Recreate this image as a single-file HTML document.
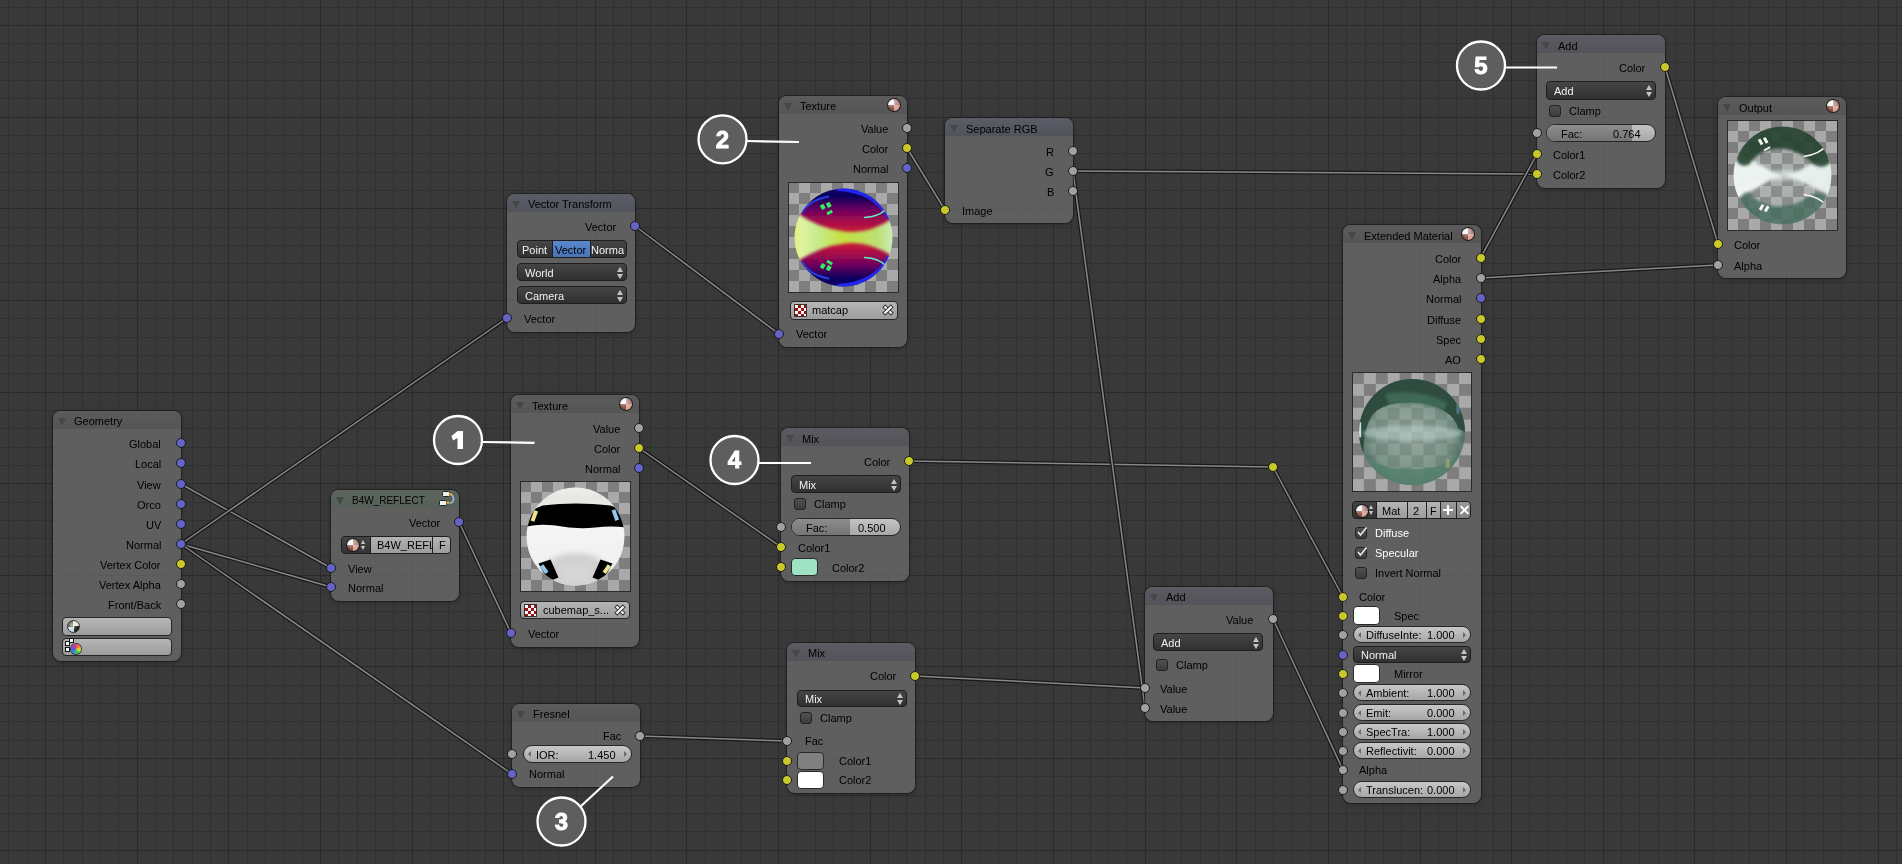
<!DOCTYPE html>
<html><head><meta charset="utf-8"><style>
*{margin:0;padding:0;box-sizing:border-box}
html,body{width:1902px;height:864px;overflow:hidden;background:#393939}
body{position:relative;-webkit-font-smoothing:antialiased;font-family:"Liberation Sans",sans-serif;font-size:11px}
.abs{position:absolute}
svg.full{position:absolute;left:0;top:0}
.node{position:absolute;border-radius:8px;background:rgba(108,108,108,0.75);overflow:hidden;
 box-shadow:0 0 0 1px rgba(20,20,20,0.55),0 1px 4px rgba(0,0,0,0.3)}
.hdr{position:absolute;left:0;top:0;right:0}
.tri{position:absolute;width:0;height:0;border-left:4.5px solid transparent;border-right:4.5px solid transparent;border-top:8.5px solid #474747}
.lbl{position:absolute;will-change:transform;white-space:nowrap;color:#000;font-size:11px;line-height:14px}
.hd{color:#000}
.sock{position:absolute;width:10px;height:10px;border-radius:50%;border:1px solid #1a1a1a}
.ball{position:absolute;border-radius:50%;
 background:radial-gradient(circle at 35% 30%,rgba(255,255,255,0.55) 0,rgba(255,255,255,0) 55%),radial-gradient(circle at 50% 50%,rgba(0,0,0,0) 55%,rgba(0,0,0,0.35) 100%),
 conic-gradient(#b08880 0 25%,#e0a898 25% 50%,#8c5048 50% 75%,#f2f2f2 75%);
 box-shadow:0 0 0 1px rgba(20,20,20,0.85)}
.dd{position:absolute;border:1px solid #1e1e1e;border-radius:4px;background:linear-gradient(#454545,#303030)}
.wt{position:absolute;will-change:transform;color:#f0f0f0;font-size:11px;line-height:14px;white-space:nowrap}
.bt{position:absolute;will-change:transform;color:#000;font-size:11px;line-height:14px;white-space:nowrap}
.arr{position:absolute;right:3px;width:6px;height:12px;
 background:linear-gradient(to bottom,transparent 0,transparent 100%)}
.arr:before{content:"";position:absolute;left:0;top:0;border-left:3px solid transparent;border-right:3px solid transparent;border-bottom:5px solid #c4c4c4}
.arr:after{content:"";position:absolute;left:0;top:6.5px;border-left:3px solid transparent;border-right:3px solid transparent;border-top:5px solid #c4c4c4}
.cb{position:absolute;width:12px;height:12px;border:1px solid #222;border-radius:3px;background:linear-gradient(#505050,#3c3c3c)}
.sl{position:absolute;border:1px solid #262626;border-radius:9px;background:linear-gradient(#c4c4c4,#a8a8a8);overflow:hidden}
.slf{position:absolute;left:0;top:0;bottom:0;background:linear-gradient(#8c8c8c,#747474)}
.nf{position:absolute;border:1px solid #262626;border-radius:9px;background:linear-gradient(#c8c8c8,#a6a6a6)}
.la{position:absolute;left:4px;top:50%;margin-top:-3px;border-top:3px solid transparent;border-bottom:3px solid transparent;border-right:3px solid #6a6a6a}
.ra{position:absolute;right:4px;top:50%;margin-top:-3px;border-top:3px solid transparent;border-bottom:3px solid transparent;border-left:3px solid #6a6a6a}
.sw{position:absolute;border:1px solid #2a2a2a;border-radius:4px}
.lb{position:absolute;border:1px solid #262626;border-radius:4px;background:linear-gradient(#b6b6b6,#9c9c9c)}
.seg{position:absolute;border:1px solid #1e1e1e;border-radius:4px;background:linear-gradient(#454545,#303030);overflow:hidden}
.segsel{position:absolute;top:0;bottom:0;background:linear-gradient(#5a88cc,#4a74b6);box-shadow:0 0 0 1px #1e1e1e}
.db{position:absolute;border:1px solid #1e1e1e;border-radius:4px;overflow:hidden;background:#222}
.dbi{position:absolute;left:0;top:0;bottom:0;background:linear-gradient(#444,#333)}
.dbl{position:absolute;top:0;bottom:0;background:linear-gradient(#b4b4b4,#9c9c9c)}
.dbd{position:absolute;top:0;bottom:0;background:linear-gradient(#9a9a9a,#828282)}
.ud{position:absolute;left:19px;top:3px;width:5px;height:10px}
.ud:before{content:"";position:absolute;left:0;top:0;border-left:2.5px solid transparent;border-right:2.5px solid transparent;border-bottom:4px solid #ccc}
.ud:after{content:"";position:absolute;left:0;top:6px;border-left:2.5px solid transparent;border-right:2.5px solid transparent;border-top:4px solid #ccc}
.plus:before{content:"";position:absolute;left:2px;top:7px;width:10px;height:2px;background:#fff}
.plus:after{content:"";position:absolute;left:6px;top:3px;width:2px;height:10px;background:#fff}
.xx:before,.xx:after{content:"";position:absolute;left:2px;top:7px;width:11px;height:2px;background:#fff;transform:rotate(45deg)}
.xx:after{transform:rotate(-45deg)}
.imgicon{position:absolute;left:3px;top:2px;width:13px;height:13px;border:1px solid #333;
 background:#fff;background-image:linear-gradient(45deg,#a01010 25%,transparent 25%,transparent 75%,#a01010 75%),linear-gradient(45deg,#a01010 25%,transparent 25%,transparent 75%,#a01010 75%);
 background-size:6px 6px;background-position:0 0,3px 3px}
.xic{position:absolute;right:4px;top:3px;width:9px;height:10px}
.xic:before,.xic:after{content:"";position:absolute;left:-1px;top:4px;width:10px;height:2px;background:#fff;box-shadow:0 0 0 1px rgba(30,30,30,0.8);transform:rotate(45deg)}
.xic:after{transform:rotate(-45deg)}
.pv{position:absolute;border:1px solid #2a2a2a;overflow:hidden;
 background-color:#999;
 background-image:linear-gradient(45deg,#6a6a6a 25%,transparent 25%,transparent 75%,#6a6a6a 75%),linear-gradient(45deg,#6a6a6a 25%,transparent 25%,transparent 75%,#6a6a6a 75%);
 background-size:22px 22px;background-position:0 0,11px 11px}
.sph{position:absolute;left:6px;top:6px;right:6px;bottom:6px;border-radius:50%}
.tex2{background:
 radial-gradient(ellipse 45% 14% at 50% 50%,#c8e040 0,#c0e060 60%,transparent 100%),
 linear-gradient(to bottom,#1a10a0 0%,#200060 12%,#900050 30%,#b02040 40%,#c8e050 46%,#c8e050 54%,#b02040 60%,#900050 70%,#200060 88%,#1a10a0 100%)}
.tex1{background:linear-gradient(to bottom,#e8e8e8 0%,#eee 12%,#000 20%,#000 32%,#f4f4f4 36%,#f8f8f8 60%,#c8c8c8 78%,#e0e0e0 88%,#f0f0f0 100%)}
.ext{background:radial-gradient(circle at 50% 50%,rgba(150,180,165,0.55) 0,rgba(120,160,140,0.6) 55%,rgba(50,90,75,0.9) 85%,rgba(40,70,60,1) 100%)}
.out{background:
 linear-gradient(to bottom,rgba(40,80,65,0.95) 0%,rgba(40,80,65,0.85) 22%,rgba(220,235,230,0.9) 42%,rgba(230,240,236,0.95) 55%,rgba(90,130,115,0.7) 72%,rgba(60,110,90,0.8) 100%)}
.uvicon{position:absolute;left:4px;top:2px;width:13px;height:13px;border-radius:50%;border:1px solid #333;
 background:radial-gradient(circle at 35% 35%,rgba(255,255,240,0.7) 0,rgba(255,255,255,0) 60%),conic-gradient(#e8e8d0 0 25%,#222 25% 50%,#c8d8e8 50% 75%,#222 75%)}
.vcsq{position:absolute;width:3px;height:3px;background:#fff;box-shadow:0 0 0 1px #111}
.vcicon{position:absolute;left:8px;top:5px;width:10px;height:10px;border-radius:50%;box-shadow:0 0 0 1px #333;
 background:conic-gradient(#e04080,#f08030,#e0e030,#40d040,#30a0e0,#4060e0,#a040c0,#e04080)}
.wo{stroke:#1a1a1a;stroke-width:4}
.wi{stroke:#888;stroke-width:1.5}
</style></head><body>
<svg class="full" width="1902" height="864"><rect x="8" y="0" width="1" height="864" fill="#303030"/><rect x="27" y="0" width="1" height="864" fill="#303030"/><rect x="45" y="0" width="1" height="864" fill="#2a2a2a"/><rect x="63" y="0" width="1" height="864" fill="#303030"/><rect x="82" y="0" width="1" height="864" fill="#303030"/><rect x="100" y="0" width="1" height="864" fill="#303030"/><rect x="118" y="0" width="1" height="864" fill="#303030"/><rect x="137" y="0" width="1" height="864" fill="#2a2a2a"/><rect x="155" y="0" width="1" height="864" fill="#303030"/><rect x="173" y="0" width="1" height="864" fill="#303030"/><rect x="192" y="0" width="1" height="864" fill="#303030"/><rect x="210" y="0" width="1" height="864" fill="#303030"/><rect x="228" y="0" width="1" height="864" fill="#2a2a2a"/><rect x="247" y="0" width="1" height="864" fill="#303030"/><rect x="265" y="0" width="1" height="864" fill="#303030"/><rect x="283" y="0" width="1" height="864" fill="#303030"/><rect x="302" y="0" width="1" height="864" fill="#303030"/><rect x="320" y="0" width="1" height="864" fill="#2a2a2a"/><rect x="338" y="0" width="1" height="864" fill="#303030"/><rect x="357" y="0" width="1" height="864" fill="#303030"/><rect x="375" y="0" width="1" height="864" fill="#303030"/><rect x="393" y="0" width="1" height="864" fill="#303030"/><rect x="412" y="0" width="1" height="864" fill="#2a2a2a"/><rect x="430" y="0" width="1" height="864" fill="#303030"/><rect x="448" y="0" width="1" height="864" fill="#303030"/><rect x="467" y="0" width="1" height="864" fill="#303030"/><rect x="485" y="0" width="1" height="864" fill="#303030"/><rect x="503" y="0" width="1" height="864" fill="#2a2a2a"/><rect x="522" y="0" width="1" height="864" fill="#303030"/><rect x="540" y="0" width="1" height="864" fill="#303030"/><rect x="558" y="0" width="1" height="864" fill="#303030"/><rect x="576" y="0" width="1" height="864" fill="#303030"/><rect x="595" y="0" width="1" height="864" fill="#2a2a2a"/><rect x="613" y="0" width="1" height="864" fill="#303030"/><rect x="631" y="0" width="1" height="864" fill="#303030"/><rect x="650" y="0" width="1" height="864" fill="#303030"/><rect x="668" y="0" width="1" height="864" fill="#303030"/><rect x="686" y="0" width="1" height="864" fill="#2a2a2a"/><rect x="705" y="0" width="1" height="864" fill="#303030"/><rect x="723" y="0" width="1" height="864" fill="#303030"/><rect x="741" y="0" width="1" height="864" fill="#303030"/><rect x="760" y="0" width="1" height="864" fill="#303030"/><rect x="778" y="0" width="1" height="864" fill="#2a2a2a"/><rect x="796" y="0" width="1" height="864" fill="#303030"/><rect x="815" y="0" width="1" height="864" fill="#303030"/><rect x="833" y="0" width="1" height="864" fill="#303030"/><rect x="851" y="0" width="1" height="864" fill="#303030"/><rect x="870" y="0" width="1" height="864" fill="#2a2a2a"/><rect x="888" y="0" width="1" height="864" fill="#303030"/><rect x="906" y="0" width="1" height="864" fill="#303030"/><rect x="925" y="0" width="1" height="864" fill="#303030"/><rect x="943" y="0" width="1" height="864" fill="#303030"/><rect x="961" y="0" width="1" height="864" fill="#2a2a2a"/><rect x="980" y="0" width="1" height="864" fill="#303030"/><rect x="998" y="0" width="1" height="864" fill="#303030"/><rect x="1016" y="0" width="1" height="864" fill="#303030"/><rect x="1035" y="0" width="1" height="864" fill="#303030"/><rect x="1053" y="0" width="1" height="864" fill="#2a2a2a"/><rect x="1071" y="0" width="1" height="864" fill="#303030"/><rect x="1090" y="0" width="1" height="864" fill="#303030"/><rect x="1108" y="0" width="1" height="864" fill="#303030"/><rect x="1126" y="0" width="1" height="864" fill="#303030"/><rect x="1145" y="0" width="1" height="864" fill="#2a2a2a"/><rect x="1163" y="0" width="1" height="864" fill="#303030"/><rect x="1181" y="0" width="1" height="864" fill="#303030"/><rect x="1200" y="0" width="1" height="864" fill="#303030"/><rect x="1218" y="0" width="1" height="864" fill="#303030"/><rect x="1236" y="0" width="1" height="864" fill="#2a2a2a"/><rect x="1255" y="0" width="1" height="864" fill="#303030"/><rect x="1273" y="0" width="1" height="864" fill="#303030"/><rect x="1291" y="0" width="1" height="864" fill="#303030"/><rect x="1310" y="0" width="1" height="864" fill="#303030"/><rect x="1328" y="0" width="1" height="864" fill="#2a2a2a"/><rect x="1346" y="0" width="1" height="864" fill="#303030"/><rect x="1365" y="0" width="1" height="864" fill="#303030"/><rect x="1383" y="0" width="1" height="864" fill="#303030"/><rect x="1401" y="0" width="1" height="864" fill="#303030"/><rect x="1420" y="0" width="1" height="864" fill="#2a2a2a"/><rect x="1438" y="0" width="1" height="864" fill="#303030"/><rect x="1456" y="0" width="1" height="864" fill="#303030"/><rect x="1475" y="0" width="1" height="864" fill="#303030"/><rect x="1493" y="0" width="1" height="864" fill="#303030"/><rect x="1511" y="0" width="1" height="864" fill="#2a2a2a"/><rect x="1529" y="0" width="1" height="864" fill="#303030"/><rect x="1548" y="0" width="1" height="864" fill="#303030"/><rect x="1566" y="0" width="1" height="864" fill="#303030"/><rect x="1584" y="0" width="1" height="864" fill="#303030"/><rect x="1603" y="0" width="1" height="864" fill="#2a2a2a"/><rect x="1621" y="0" width="1" height="864" fill="#303030"/><rect x="1639" y="0" width="1" height="864" fill="#303030"/><rect x="1658" y="0" width="1" height="864" fill="#303030"/><rect x="1676" y="0" width="1" height="864" fill="#303030"/><rect x="1694" y="0" width="1" height="864" fill="#2a2a2a"/><rect x="1713" y="0" width="1" height="864" fill="#303030"/><rect x="1731" y="0" width="1" height="864" fill="#303030"/><rect x="1749" y="0" width="1" height="864" fill="#303030"/><rect x="1768" y="0" width="1" height="864" fill="#303030"/><rect x="1786" y="0" width="1" height="864" fill="#2a2a2a"/><rect x="1804" y="0" width="1" height="864" fill="#303030"/><rect x="1823" y="0" width="1" height="864" fill="#303030"/><rect x="1841" y="0" width="1" height="864" fill="#303030"/><rect x="1859" y="0" width="1" height="864" fill="#303030"/><rect x="1878" y="0" width="1" height="864" fill="#2a2a2a"/><rect x="1896" y="0" width="1" height="864" fill="#303030"/><rect x="0" y="7" width="1902" height="1" fill="#303030"/><rect x="0" y="25" width="1902" height="1" fill="#2a2a2a"/><rect x="0" y="43" width="1902" height="1" fill="#303030"/><rect x="0" y="62" width="1902" height="1" fill="#303030"/><rect x="0" y="80" width="1902" height="1" fill="#303030"/><rect x="0" y="98" width="1902" height="1" fill="#303030"/><rect x="0" y="117" width="1902" height="1" fill="#2a2a2a"/><rect x="0" y="135" width="1902" height="1" fill="#303030"/><rect x="0" y="153" width="1902" height="1" fill="#303030"/><rect x="0" y="172" width="1902" height="1" fill="#303030"/><rect x="0" y="190" width="1902" height="1" fill="#303030"/><rect x="0" y="208" width="1902" height="1" fill="#2a2a2a"/><rect x="0" y="227" width="1902" height="1" fill="#303030"/><rect x="0" y="245" width="1902" height="1" fill="#303030"/><rect x="0" y="263" width="1902" height="1" fill="#303030"/><rect x="0" y="282" width="1902" height="1" fill="#303030"/><rect x="0" y="300" width="1902" height="1" fill="#2a2a2a"/><rect x="0" y="318" width="1902" height="1" fill="#303030"/><rect x="0" y="337" width="1902" height="1" fill="#303030"/><rect x="0" y="355" width="1902" height="1" fill="#303030"/><rect x="0" y="373" width="1902" height="1" fill="#303030"/><rect x="0" y="392" width="1902" height="1" fill="#2a2a2a"/><rect x="0" y="410" width="1902" height="1" fill="#303030"/><rect x="0" y="428" width="1902" height="1" fill="#303030"/><rect x="0" y="447" width="1902" height="1" fill="#303030"/><rect x="0" y="465" width="1902" height="1" fill="#303030"/><rect x="0" y="483" width="1902" height="1" fill="#2a2a2a"/><rect x="0" y="502" width="1902" height="1" fill="#303030"/><rect x="0" y="520" width="1902" height="1" fill="#303030"/><rect x="0" y="538" width="1902" height="1" fill="#303030"/><rect x="0" y="556" width="1902" height="1" fill="#303030"/><rect x="0" y="575" width="1902" height="1" fill="#2a2a2a"/><rect x="0" y="593" width="1902" height="1" fill="#303030"/><rect x="0" y="611" width="1902" height="1" fill="#303030"/><rect x="0" y="630" width="1902" height="1" fill="#303030"/><rect x="0" y="648" width="1902" height="1" fill="#303030"/><rect x="0" y="666" width="1902" height="1" fill="#2a2a2a"/><rect x="0" y="685" width="1902" height="1" fill="#303030"/><rect x="0" y="703" width="1902" height="1" fill="#303030"/><rect x="0" y="721" width="1902" height="1" fill="#303030"/><rect x="0" y="740" width="1902" height="1" fill="#303030"/><rect x="0" y="758" width="1902" height="1" fill="#2a2a2a"/><rect x="0" y="776" width="1902" height="1" fill="#303030"/><rect x="0" y="795" width="1902" height="1" fill="#303030"/><rect x="0" y="813" width="1902" height="1" fill="#303030"/><rect x="0" y="831" width="1902" height="1" fill="#303030"/><rect x="0" y="850" width="1902" height="1" fill="#2a2a2a"/></svg>
<svg class="full" width="1902" height="864"><line x1="181" y1="484" x2="331" y2="568" class="wo"/><line x1="181" y1="484" x2="331" y2="568" class="wi"/><line x1="181" y1="544" x2="331" y2="587" class="wo"/><line x1="181" y1="544" x2="331" y2="587" class="wi"/><line x1="181" y1="544" x2="507" y2="318" class="wo"/><line x1="181" y1="544" x2="507" y2="318" class="wi"/><line x1="181" y1="544" x2="512" y2="774" class="wo"/><line x1="181" y1="544" x2="512" y2="774" class="wi"/><line x1="459" y1="522" x2="511" y2="633" class="wo"/><line x1="459" y1="522" x2="511" y2="633" class="wi"/><line x1="635" y1="226" x2="779" y2="334" class="wo"/><line x1="635" y1="226" x2="779" y2="334" class="wi"/><line x1="907" y1="148" x2="945" y2="210" class="wo"/><line x1="907" y1="148" x2="945" y2="210" class="wi"/><line x1="639" y1="448" x2="781" y2="547" class="wo"/><line x1="639" y1="448" x2="781" y2="547" class="wi"/><line x1="640" y1="736" x2="787" y2="741" class="wo"/><line x1="640" y1="736" x2="787" y2="741" class="wi"/><line x1="909" y1="461" x2="1273" y2="467" class="wo"/><line x1="909" y1="461" x2="1273" y2="467" class="wi"/><line x1="1273" y1="467" x2="1343" y2="597" class="wo"/><line x1="1273" y1="467" x2="1343" y2="597" class="wi"/><line x1="1073" y1="171" x2="1537" y2="174" class="wo"/><line x1="1073" y1="171" x2="1537" y2="174" class="wi"/><line x1="1073" y1="171" x2="1145" y2="708" class="wo"/><line x1="1073" y1="171" x2="1145" y2="708" class="wi"/><line x1="915" y1="676" x2="1145" y2="688" class="wo"/><line x1="915" y1="676" x2="1145" y2="688" class="wi"/><line x1="1273" y1="619" x2="1343" y2="770" class="wo"/><line x1="1273" y1="619" x2="1343" y2="770" class="wi"/><line x1="1480.5" y1="258" x2="1537" y2="154" class="wo"/><line x1="1480.5" y1="258" x2="1537" y2="154" class="wi"/><line x1="1480.5" y1="278" x2="1718" y2="265" class="wo"/><line x1="1480.5" y1="278" x2="1718" y2="265" class="wi"/><line x1="1665" y1="67" x2="1718" y2="244" class="wo"/><line x1="1665" y1="67" x2="1718" y2="244" class="wi"/></svg>
<div class="node" style="left:53px;top:411px;width:128px;height:250px"><div class="hdr" style="height:18px;background:linear-gradient(#5b5b5b,#555555)"></div></div><div class="tri" style="left:58px;top:418px"></div><div class="lbl hd" style="left:74px;top:414px;">Geometry</div><div class="lbl" style="right:1741px;top:437px;color:#000;">Global</div><div class="sock" style="left:176px;top:438px;background:#6363c8"></div><div class="lbl" style="right:1741px;top:457px;color:#000;">Local</div><div class="sock" style="left:176px;top:458px;background:#6363c8"></div><div class="lbl" style="right:1741px;top:478px;color:#000;">View</div><div class="sock" style="left:176px;top:479px;background:#6363c8"></div><div class="lbl" style="right:1741px;top:498px;color:#000;">Orco</div><div class="sock" style="left:176px;top:499px;background:#6363c8"></div><div class="lbl" style="right:1741px;top:518px;color:#000;">UV</div><div class="sock" style="left:176px;top:519px;background:#6363c8"></div><div class="lbl" style="right:1741px;top:538px;color:#000;">Normal</div><div class="sock" style="left:176px;top:539px;background:#6363c8"></div><div class="lbl" style="right:1741px;top:558px;color:#000;">Vertex Color</div><div class="sock" style="left:176px;top:559px;background:#c8c82a"></div><div class="lbl" style="right:1741px;top:578px;color:#000;">Vertex Alpha</div><div class="sock" style="left:176px;top:579px;background:#a1a1a1"></div><div class="lbl" style="right:1741px;top:598px;color:#000;">Front/Back</div><div class="sock" style="left:176px;top:599px;background:#a1a1a1"></div><div class="lb" style="left:62px;top:617px;width:110px;height:19px"><div class="uvicon"></div></div><div class="lb" style="left:62px;top:638px;width:110px;height:18px"><div class="vcsq" style="left:3px;top:3px"></div><div class="vcsq" style="left:7px;top:0px"></div><div class="vcsq" style="left:3px;top:9px"></div><div class="vcicon"></div></div><div class="node" style="left:331px;top:490px;width:128px;height:111px"><div class="hdr" style="height:18px;background:linear-gradient(#5c645e,#566058)"></div></div><div class="tri" style="left:336px;top:497px"></div><div class="lbl hd" style="left:352px;top:494px;font-size:10px;">B4W_REFLECT</div><svg class="abs" style="left:439px;top:491px" width="16" height="16" viewBox="0 0 16 16"><path d="M11.5 3.5 Q14.5 4 14.5 8 Q14.5 12 10.5 12" fill="none" stroke="#9fb8e0" stroke-width="1.6"/><rect x="3.5" y="0.5" width="7" height="5" rx="1" fill="#f0f0f0" stroke="#222"/><rect x="0.5" y="9.5" width="7" height="5" rx="1" fill="#f0f0f0" stroke="#222"/><rect x="10" y="2" width="2.5" height="2.5" fill="#e8a020"/><rect x="7.5" y="10.5" width="2.5" height="2.5" fill="#e8a020"/></svg><div class="lbl" style="right:1462px;top:516px;color:#000;">Vector</div><div class="sock" style="left:454px;top:517px;background:#6363c8"></div><div class="db" style="left:341px;top:536px;width:110px;height:18px"><div class="dbi" style="width:28px"><div class="ball" style="left:5px;top:2px;width:12px;height:12px"></div><span class="ud"></span></div><div class="dbl" style="left:29px;width:61px"><span class="bt" style="left:6px;top:1px">B4W_REFL</span></div><div class="dbl" style="left:91px;width:19px"><span class="bt" style="left:6px;top:1px">F</span></div></div><div class="lbl" style="left:348px;top:562px;color:#000;">View</div><div class="sock" style="left:326px;top:563px;background:#6363c8"></div><div class="lbl" style="left:348px;top:581px;color:#000;">Normal</div><div class="sock" style="left:326px;top:582px;background:#6363c8"></div><div class="node" style="left:507px;top:194px;width:128px;height:138px"><div class="hdr" style="height:18px;background:linear-gradient(#5b5d66,#52545c)"></div></div><div class="tri" style="left:512px;top:201px"></div><div class="lbl hd" style="left:528px;top:197px;">Vector Transform</div><div class="lbl" style="right:1286px;top:220px;color:#000;">Vector</div><div class="sock" style="left:630px;top:221px;background:#6363c8"></div><div class="seg" style="left:517px;top:240px;width:110px;height:18px"><span class="wt" style="left:4px;top:2px">Point</span><div class="segsel" style="left:35px;width:37px"></div><span class="bt" style="left:37px;top:2px">Vector</span><span class="wt" style="left:73px;top:2px;width:35px;overflow:hidden">Norma</span></div><div class="dd" style="left:517px;top:263px;width:110px;height:18px"><span class="wt" style="left:7px;top:2px">World</span><span class="arr" style="top:3px"></span></div><div class="dd" style="left:517px;top:286px;width:110px;height:18px"><span class="wt" style="left:7px;top:2px">Camera</span><span class="arr" style="top:3px"></span></div><div class="lbl" style="left:524px;top:312px;color:#000;">Vector</div><div class="sock" style="left:502px;top:313px;background:#6363c8"></div><div class="node" style="left:779px;top:96px;width:128px;height:251px"><div class="hdr" style="height:18px;background:linear-gradient(#5b5b5b,#555555)"></div></div><div class="tri" style="left:784px;top:103px"></div><div class="lbl hd" style="left:800px;top:99px;">Texture</div><div class="ball" style="left:888px;top:99px;width:12px;height:12px"></div><div class="lbl" style="right:1014px;top:122px;color:#000;">Value</div><div class="sock" style="left:902px;top:123px;background:#a1a1a1"></div><div class="lbl" style="right:1014px;top:142px;color:#000;">Color</div><div class="sock" style="left:902px;top:143px;background:#c8c82a"></div><div class="lbl" style="right:1014px;top:162px;color:#000;">Normal</div><div class="sock" style="left:902px;top:163px;background:#6363c8"></div><svg class="abs" style="left:788px;top:182px" width="111" height="111" viewBox="0 0 111 111"><defs><pattern id="ck1" width="22.0" height="22.0" patternUnits="userSpaceOnUse"><rect width="22.0" height="22.0" fill="#a9a9a9"/><rect width="11.0" height="11.0" fill="#7e7e7e"/><rect x="11.0" y="11.0" width="11.0" height="11.0" fill="#7e7e7e"/></pattern><clipPath id="cp1"><circle cx="55.0" cy="55.0" r="48.95"/></clipPath><filter id="bl1" x="-20%" y="-20%" width="140%" height="140%"><feGaussianBlur stdDeviation="1.57"/></filter><filter id="bs1" x="-20%" y="-20%" width="140%" height="140%"><feGaussianBlur stdDeviation="0.50"/></filter><linearGradient id="g1a" x1="0" x2="1" y1="0" y2="0"><stop offset="0" stop-color="#e8f060"/><stop offset="0.12" stop-color="#e0f2a0"/><stop offset="0.25" stop-color="#c8ec90"/><stop offset="0.5" stop-color="#c4e040"/><stop offset="0.8" stop-color="#bce070"/><stop offset="1" stop-color="#d0f0d0"/></linearGradient><linearGradient id="g1b" x1="0" x2="0" y1="0" y2="1"><stop offset="0" stop-color="#0a0070"/><stop offset="0.25" stop-color="#10005a"/><stop offset="0.5" stop-color="#6a0060"/><stop offset="0.78" stop-color="#a80c48"/><stop offset="1" stop-color="#c81838"/></linearGradient><linearGradient id="g1c" x1="0" x2="0" y1="1" y2="0"><stop offset="0" stop-color="#0a0070"/><stop offset="0.25" stop-color="#10005a"/><stop offset="0.5" stop-color="#6a0060"/><stop offset="0.78" stop-color="#a80c48"/><stop offset="1" stop-color="#c81838"/></linearGradient></defs><rect x="0" y="0" width="111" height="111" fill="url(#ck1)"/><g transform="translate(0.5 0.5)"><g clip-path="url(#cp1)"><rect width="110" height="110" fill="url(#g1a)"/><g filter="url(#bl1)"><path d="M8.0 30.0 Q20.0 6.0 55.0 4.0 Q95.0 4.0 104.0 36.0 Q80.0 52.0 56.0 49.0 Q30.0 46.0 8.0 30.0 Z" fill="url(#g1b)"/><path d="M8.0 80.0 Q20.0 104.0 55.0 106.0 Q95.0 106.0 104.0 74.0 Q80.0 58.0 56.0 61.0 Q30.0 64.0 8.0 80.0 Z" fill="url(#g1c)"/></g><g filter="url(#bs1)" fill="none" stroke-linecap="round"><path d="M50.0 6.0 Q86.0 8.0 100.0 34.0" stroke="#2028f0" stroke-width="5.0"/><path d="M50.0 104.0 Q86.0 102.0 100.0 76.0" stroke="#2028f0" stroke-width="5.0"/><path d="M76.0 35.0 Q90.0 34.0 96.0 28.0" stroke="#60f0c0" stroke-width="1.5"/><path d="M76.0 75.0 Q90.0 76.0 96.0 82.0" stroke="#60f0c0" stroke-width="1.5"/><path d="M14.0 30.0 Q20.0 18.0 40.0 14.0" stroke="#2040e0" stroke-width="2.0"/><path d="M14.0 80.0 Q20.0 92.0 40.0 96.0" stroke="#2040e0" stroke-width="2.0"/></g><g fill="#30f060"><rect x="32.0" y="22.0" width="4.0" height="5.0" transform="rotate(-30 34.0 24.0)"/><rect x="38.0" y="20.0" width="4.0" height="5.0" transform="rotate(-30 40.0 22.0)"/><rect x="38.0" y="29.0" width="6.0" height="3.0" transform="rotate(-30 40.0 30.0)"/><rect x="32.0" y="81.0" width="4.0" height="5.0" transform="rotate(30 34.0 84.0)"/><rect x="38.0" y="83.0" width="4.0" height="5.0" transform="rotate(30 40.0 86.0)"/><rect x="38.0" y="78.0" width="6.0" height="3.0" transform="rotate(30 40.0 80.0)"/><rect x="70.0" y="8.0" width="8.0" height="2.0" transform="rotate(20 74.0 9.0)"/><rect x="70.0" y="100.0" width="8.0" height="2.0" transform="rotate(-20 74.0 101.0)"/></g></g></g><rect x="0.5" y="0.5" width="110" height="110" fill="none" stroke="#2a2a2a"/></svg><div class="lb" style="left:790px;top:301px;width:108px;height:19px"><div class="imgicon"></div><span class="bt" style="left:21px;top:1px">matcap</span><span class="xic"></span></div><div class="lbl" style="left:796px;top:327px;color:#000;">Vector</div><div class="sock" style="left:774px;top:329px;background:#6363c8"></div><div class="node" style="left:945px;top:118px;width:128px;height:105px"><div class="hdr" style="height:18px;background:linear-gradient(#5b5d66,#52545c)"></div></div><div class="tri" style="left:950px;top:125px"></div><div class="lbl hd" style="left:966px;top:122px;">Separate RGB</div><div class="lbl" style="right:848px;top:145px;color:#000;">R</div><div class="sock" style="left:1068px;top:146px;background:#a1a1a1"></div><div class="lbl" style="right:848px;top:165px;color:#000;">G</div><div class="sock" style="left:1068px;top:166px;background:#a1a1a1"></div><div class="lbl" style="right:848px;top:185px;color:#000;">B</div><div class="sock" style="left:1068px;top:186px;background:#a1a1a1"></div><div class="lbl" style="left:962px;top:204px;color:#000;">Image</div><div class="sock" style="left:940px;top:205px;background:#c8c82a"></div><div class="node" style="left:511px;top:395px;width:128px;height:252px"><div class="hdr" style="height:18px;background:linear-gradient(#5b5b5b,#555555)"></div></div><div class="tri" style="left:516px;top:402px"></div><div class="lbl hd" style="left:532px;top:399px;">Texture</div><div class="ball" style="left:620px;top:398px;width:12px;height:12px"></div><div class="lbl" style="right:1282px;top:422px;color:#000;">Value</div><div class="sock" style="left:634px;top:423px;background:#a1a1a1"></div><div class="lbl" style="right:1282px;top:442px;color:#000;">Color</div><div class="sock" style="left:634px;top:443px;background:#c8c82a"></div><div class="lbl" style="right:1282px;top:462px;color:#000;">Normal</div><div class="sock" style="left:634px;top:463px;background:#6363c8"></div><svg class="abs" style="left:520px;top:481px" width="111" height="111" viewBox="0 0 111 111"><defs><pattern id="ck2" width="22.0" height="22.0" patternUnits="userSpaceOnUse"><rect width="22.0" height="22.0" fill="#a9a9a9"/><rect width="11.0" height="11.0" fill="#7e7e7e"/><rect x="11.0" y="11.0" width="11.0" height="11.0" fill="#7e7e7e"/></pattern><clipPath id="cp2"><circle cx="55.0" cy="55.0" r="48.95"/></clipPath><filter id="bl2" x="-20%" y="-20%" width="140%" height="140%"><feGaussianBlur stdDeviation="1.57"/></filter><filter id="bs2" x="-20%" y="-20%" width="140%" height="140%"><feGaussianBlur stdDeviation="0.50"/></filter><linearGradient id="g2a" x1="0" x2="0" y1="0" y2="1"><stop offset="0" stop-color="#f4f4f4"/><stop offset="0.15" stop-color="#e6e6e2"/><stop offset="0.4" stop-color="#f6f6f6"/><stop offset="0.6" stop-color="#f2f2f2"/><stop offset="1" stop-color="#f0f0f0"/></linearGradient><radialGradient id="g2b" cx="0.5" cy="0.5" r="0.5"><stop offset="0" stop-color="#d8d8d8"/><stop offset="0.7" stop-color="#cfcfcf"/><stop offset="1" stop-color="#cfcfcf" stop-opacity="0"/></radialGradient></defs><rect x="0" y="0" width="111" height="111" fill="url(#ck2)"/><g transform="translate(0.5 0.5)"><g clip-path="url(#cp2)"><rect width="110" height="110" fill="url(#g2a)"/><ellipse cx="55.0" cy="92.0" rx="38.0" ry="24.0" fill="url(#g2b)" filter="url(#bl2)"/><path d="M4.0 38.0 Q10.0 28.0 22.0 24.0 Q55.0 20.0 90.0 24.0 Q104.0 28.0 106.0 40.0 L106.0 46.0 Q90.0 44.0 75.0 46.0 Q55.0 48.0 35.0 44.0 Q15.0 42.0 4.0 46.0 Z" fill="#000" filter="url(#bs2)"/><rect x="12.0" y="29.0" width="4.0" height="11.0" fill="#f0e090" transform="rotate(20 14.0 34.0)"/><rect x="93.0" y="28.0" width="4.0" height="11.0" fill="#90c8f0" transform="rotate(-20 95.0 34.0)"/><path d="M18.0 82.0 L30.0 78.0 L38.0 96.0 L28.0 100.0 Z" fill="#000"/><path d="M92.0 82.0 L80.0 78.0 L72.0 96.0 L82.0 100.0 Z" fill="#000"/><rect x="22.0" y="83.0" width="4.0" height="9.0" fill="#90c8f0" transform="rotate(-35 24.0 88.0)"/><rect x="84.0" y="83.0" width="4.0" height="9.0" fill="#f0e090" transform="rotate(35 86.0 88.0)"/></g></g><rect x="0.5" y="0.5" width="110" height="110" fill="none" stroke="#2a2a2a"/></svg><div class="lb" style="left:520px;top:601px;width:110px;height:18px"><div class="imgicon"></div><span class="bt" style="left:22px;top:1px">cubemap_s...</span><span class="xic"></span></div><div class="lbl" style="left:528px;top:627px;color:#000;">Vector</div><div class="sock" style="left:506px;top:628px;background:#6363c8"></div><div class="node" style="left:781px;top:428px;width:128px;height:153px"><div class="hdr" style="height:18px;background:linear-gradient(#5b5b61,#535359)"></div></div><div class="tri" style="left:786px;top:435px"></div><div class="lbl hd" style="left:802px;top:432px;">Mix</div><div class="lbl" style="right:1012px;top:455px;color:#000;">Color</div><div class="sock" style="left:904px;top:456px;background:#c8c82a"></div><div class="dd" style="left:791px;top:475px;width:110px;height:18px"><span class="wt" style="left:7px;top:2px">Mix</span><span class="arr" style="top:3px"></span></div><div class="cb" style="left:794px;top:498px"></div><div class="lbl" style="left:814px;top:497px;color:#000">Clamp</div><div class="sl" style="left:791px;top:518px;width:110px;height:18px"><div class="slf" style="width:58px"></div><span class="bt" style="left:14px;top:2px">Fac:</span><span class="bt" style="right:14px;top:2px">0.500</span></div><div class="sock" style="left:776px;top:522px;background:#a1a1a1"></div><div class="lbl" style="left:798px;top:541px;color:#000;">Color1</div><div class="sock" style="left:776px;top:542px;background:#c8c82a"></div><div class="sw" style="left:791px;top:558px;width:27px;height:18px;background:#a0e2c4"></div><div class="lbl" style="left:832px;top:561px;color:#000;">Color2</div><div class="sock" style="left:776px;top:562px;background:#c8c82a"></div><div class="node" style="left:512px;top:704px;width:128px;height:83px"><div class="hdr" style="height:18px;background:linear-gradient(#5b5b5b,#555555)"></div></div><div class="tri" style="left:517px;top:711px"></div><div class="lbl hd" style="left:533px;top:707px;">Fresnel</div><div class="lbl" style="right:1281px;top:729px;color:#000;">Fac</div><div class="sock" style="left:635px;top:731px;background:#a1a1a1"></div><div class="nf" style="left:523px;top:745px;width:109px;height:18px"><span class="la"></span><span class="ra"></span><span class="bt" style="left:12px;top:2px">IOR:</span><span class="bt" style="right:15px;top:2px">1.450</span></div><div class="sock" style="left:507px;top:749px;background:#a1a1a1"></div><div class="lbl" style="left:529px;top:767px;color:#000;">Normal</div><div class="sock" style="left:507px;top:769px;background:#6363c8"></div><div class="node" style="left:787px;top:643px;width:128px;height:150px"><div class="hdr" style="height:18px;background:linear-gradient(#5b5b61,#535359)"></div></div><div class="tri" style="left:792px;top:650px"></div><div class="lbl hd" style="left:808px;top:646px;">Mix</div><div class="lbl" style="right:1006px;top:669px;color:#000;">Color</div><div class="sock" style="left:910px;top:671px;background:#c8c82a"></div><div class="dd" style="left:797px;top:690px;width:110px;height:17px"><span class="wt" style="left:7px;top:1px">Mix</span><span class="arr" style="top:2px"></span></div><div class="cb" style="left:800px;top:712px"></div><div class="lbl" style="left:820px;top:711px;color:#000">Clamp</div><div class="lbl" style="left:805px;top:734px;color:#000;">Fac</div><div class="sock" style="left:782px;top:736px;background:#a1a1a1"></div><div class="sw" style="left:797px;top:752px;width:27px;height:18px;background:#808080"></div><div class="lbl" style="left:839px;top:754px;color:#000;">Color1</div><div class="sock" style="left:782px;top:756px;background:#c8c82a"></div><div class="sw" style="left:797px;top:771px;width:27px;height:18px;background:#ffffff"></div><div class="lbl" style="left:839px;top:773px;color:#000;">Color2</div><div class="sock" style="left:782px;top:775px;background:#c8c82a"></div><div class="node" style="left:1145px;top:587px;width:128px;height:134px"><div class="hdr" style="height:18px;background:linear-gradient(#5b5b61,#535359)"></div></div><div class="tri" style="left:1150px;top:594px"></div><div class="lbl hd" style="left:1166px;top:590px;">Add</div><div class="lbl" style="right:649px;top:613px;color:#000;">Value</div><div class="sock" style="left:1268px;top:614px;background:#a1a1a1"></div><div class="dd" style="left:1153px;top:633px;width:110px;height:18px"><span class="wt" style="left:7px;top:2px">Add</span><span class="arr" style="top:3px"></span></div><div class="cb" style="left:1156px;top:659px"></div><div class="lbl" style="left:1176px;top:658px;color:#000">Clamp</div><div class="lbl" style="left:1160px;top:682px;color:#000;">Value</div><div class="sock" style="left:1140px;top:683px;background:#a1a1a1"></div><div class="lbl" style="left:1160px;top:702px;color:#000;">Value</div><div class="sock" style="left:1140px;top:703px;background:#a1a1a1"></div><div class="node" style="left:1343px;top:225px;width:138px;height:578px"><div class="hdr" style="height:18px;background:linear-gradient(#5b5b5b,#555555)"></div></div><div class="tri" style="left:1348px;top:232px"></div><div class="lbl hd" style="left:1364px;top:229px;">Extended Material</div><div class="ball" style="left:1462px;top:228px;width:12px;height:12px"></div><div class="lbl" style="right:441px;top:252px;color:#000;">Color</div><div class="sock" style="left:1475.5px;top:253px;background:#c8c82a"></div><div class="lbl" style="right:441px;top:272px;color:#000;">Alpha</div><div class="sock" style="left:1475.5px;top:273px;background:#a1a1a1"></div><div class="lbl" style="right:441px;top:292px;color:#000;">Normal</div><div class="sock" style="left:1475.5px;top:293px;background:#6363c8"></div><div class="lbl" style="right:441px;top:313px;color:#000;">Diffuse</div><div class="sock" style="left:1475.5px;top:314px;background:#c8c82a"></div><div class="lbl" style="right:441px;top:333px;color:#000;">Spec</div><div class="sock" style="left:1475.5px;top:334px;background:#c8c82a"></div><div class="lbl" style="right:441px;top:353px;color:#000;">AO</div><div class="sock" style="left:1475.5px;top:354px;background:#c8c82a"></div><svg class="abs" style="left:1352px;top:372px" width="120" height="120" viewBox="0 0 120 120"><defs><pattern id="ck3" width="23.8" height="23.8" patternUnits="userSpaceOnUse"><rect width="23.8" height="23.8" fill="#a9a9a9"/><rect width="11.9" height="11.9" fill="#7e7e7e"/><rect x="11.9" y="11.9" width="11.9" height="11.9" fill="#7e7e7e"/></pattern><clipPath id="cp3"><circle cx="59.5" cy="59.5" r="52.955"/></clipPath><filter id="bl3" x="-20%" y="-20%" width="140%" height="140%"><feGaussianBlur stdDeviation="1.70"/></filter><filter id="bs3" x="-20%" y="-20%" width="140%" height="140%"><feGaussianBlur stdDeviation="0.54"/></filter><radialGradient id="g3a" cx="0.5" cy="0.5" r="0.5"><stop offset="0" stop-color="#8aa89a" stop-opacity="0.55"/><stop offset="0.7" stop-color="#6a8c7e" stop-opacity="0.7"/><stop offset="0.92" stop-color="#46695b" stop-opacity="0.9"/><stop offset="1" stop-color="#2c4c40" stop-opacity="1"/></radialGradient></defs><rect x="0" y="0" width="120" height="120" fill="url(#ck3)"/><g transform="translate(0.5 0.5)"><g clip-path="url(#cp3)"><rect width="119" height="119" fill="url(#g3a)"/><g filter="url(#bs3)"><path d="M4.327272727272727 75.72727272727272 Q4.327272727272727 4.327272727272727 59.5 4.327272727272727 Q112.5090909090909 4.327272727272727 114.67272727272727 60.58181818181818 L106.01818181818182 56.25454545454545 Q99.52727272727273 34.61818181818182 64.9090909090909 30.29090909090909 Q30.29090909090909 28.127272727272725 19.472727272727273 43.27272727272727 Q10.818181818181818 56.25454545454545 10.818181818181818 80.05454545454545 Z" fill="#2a4a3d" opacity="0.95"/><path d="M6.49090909090909 77.89090909090909 Q12.98181818181818 114.67272727272727 59.5 114.67272727272727 Q106.01818181818182 114.67272727272727 112.5090909090909 75.72727272727272 Q103.85454545454544 88.7090909090909 88.7090909090909 93.03636363636363 Q64.9090909090909 99.52727272727273 36.78181818181818 95.2 Q15.145454545454545 88.7090909090909 6.49090909090909 77.89090909090909 Z" fill="#55806f" opacity="0.85"/></g><g filter="url(#bl3)"><ellipse cx="59.5" cy="60.58181818181818" rx="49.763636363636365" ry="7.572727272727272" fill="#c4dcd2" opacity="0.45"/><path d="M32.45454545454545 21.636363636363637 Q64.9090909090909 15.145454545454545 95.2 30.29090909090909 L90.87272727272727 38.945454545454545 Q64.9090909090909 28.127272727272725 36.78181818181818 32.45454545454545 Z" fill="#4a7a66" opacity="0.6"/></g><rect x="3.245454545454545" y="49.763636363636365" width="5.409090909090909" height="15.145454545454545" fill="#c8e4d8"/><rect x="103.85454545454544" y="30.29090909090909" width="3.245454545454545" height="10.818181818181818" fill="#5a8aa0" opacity="0.7"/><rect x="93.03636363636363" y="86.54545454545455" width="4.327272727272727" height="8.654545454545454" fill="#a0a870" opacity="0.7"/></g></g><rect x="0.5" y="0.5" width="119" height="119" fill="none" stroke="#2a2a2a"/></svg><div class="db" style="left:1352px;top:501px;width:119px;height:18px"><div class="dbi" style="width:23px"><div class="ball" style="left:3px;top:3px;width:12px;height:12px"></div><span class="ud" style="left:16px"></span></div><div class="dbl" style="left:24px;width:30px"><span class="bt" style="left:5px;top:2px">Mat</span></div><div class="dbl" style="left:55px;width:18px"><span class="bt" style="left:5px;top:2px">2</span></div><div class="dbl" style="left:74px;width:13px"><span class="bt" style="left:3px;top:2px">F</span></div><div class="dbd" style="left:88px;width:15px"><span class="plus"></span></div><div class="dbd" style="left:104px;width:15px;border-radius:0 4px 4px 0"><span class="xx"></span></div></div><div class="cb" style="left:1355px;top:527px"></div><svg class="abs" style="left:1355px;top:525px" width="14" height="14" viewBox="0 0 14 14"><path d="M3 7 L5.5 10 L11.5 2.5" fill="none" stroke="#e8e8e8" stroke-width="1.6"/></svg><div class="lbl" style="left:1375px;top:526px;color:#fff">Diffuse</div><div class="cb" style="left:1355px;top:547px"></div><svg class="abs" style="left:1355px;top:545px" width="14" height="14" viewBox="0 0 14 14"><path d="M3 7 L5.5 10 L11.5 2.5" fill="none" stroke="#e8e8e8" stroke-width="1.6"/></svg><div class="lbl" style="left:1375px;top:546px;color:#fff">Specular</div><div class="cb" style="left:1355px;top:567px"></div><div class="lbl" style="left:1375px;top:566px;color:#000">Invert Normal</div><div class="lbl" style="left:1359px;top:590px;color:#000;">Color</div><div class="sock" style="left:1338px;top:592px;background:#c8c82a"></div><div class="sw" style="left:1353px;top:606px;width:27px;height:19px;background:#ffffff"></div><div class="lbl" style="left:1394px;top:609px;color:#000;">Spec</div><div class="sock" style="left:1338px;top:611px;background:#c8c82a"></div><div class="nf" style="left:1353px;top:626px;width:118px;height:17px"><span class="la"></span><span class="ra"></span><span class="bt" style="left:12px;top:1px">DiffuseInte:</span><span class="bt" style="right:15px;top:1px">1.000</span></div><div class="sock" style="left:1338px;top:630px;background:#a1a1a1"></div><div class="dd" style="left:1353px;top:646px;width:118px;height:17px"><span class="wt" style="left:7px;top:1px">Normal</span><span class="arr" style="top:2px"></span></div><div class="sock" style="left:1338px;top:650px;background:#6363c8"></div><div class="sw" style="left:1353px;top:664px;width:27px;height:19px;background:#ffffff"></div><div class="lbl" style="left:1394px;top:667px;color:#000;">Mirror</div><div class="sock" style="left:1338px;top:669px;background:#c8c82a"></div><div class="nf" style="left:1353px;top:684px;width:118px;height:17px"><span class="la"></span><span class="ra"></span><span class="bt" style="left:12px;top:1px">Ambient:</span><span class="bt" style="right:15px;top:1px">1.000</span></div><div class="sock" style="left:1338px;top:688px;background:#a1a1a1"></div><div class="nf" style="left:1353px;top:704px;width:118px;height:17px"><span class="la"></span><span class="ra"></span><span class="bt" style="left:12px;top:1px">Emit:</span><span class="bt" style="right:15px;top:1px">0.000</span></div><div class="sock" style="left:1338px;top:708px;background:#a1a1a1"></div><div class="nf" style="left:1353px;top:723px;width:118px;height:17px"><span class="la"></span><span class="ra"></span><span class="bt" style="left:12px;top:1px">SpecTra:</span><span class="bt" style="right:15px;top:1px">1.000</span></div><div class="sock" style="left:1338px;top:727px;background:#a1a1a1"></div><div class="nf" style="left:1353px;top:742px;width:118px;height:17px"><span class="la"></span><span class="ra"></span><span class="bt" style="left:12px;top:1px">Reflectivit:</span><span class="bt" style="right:15px;top:1px">0.000</span></div><div class="sock" style="left:1338px;top:746px;background:#a1a1a1"></div><div class="lbl" style="left:1359px;top:763px;color:#000;">Alpha</div><div class="sock" style="left:1338px;top:765px;background:#a1a1a1"></div><div class="nf" style="left:1353px;top:781px;width:118px;height:17px"><span class="la"></span><span class="ra"></span><span class="bt" style="left:12px;top:1px">Translucen:</span><span class="bt" style="right:15px;top:1px">0.000</span></div><div class="sock" style="left:1338px;top:785px;background:#a1a1a1"></div><div class="node" style="left:1537px;top:35px;width:128px;height:153px"><div class="hdr" style="height:18px;background:linear-gradient(#5b5b61,#535359)"></div></div><div class="tri" style="left:1542px;top:42px"></div><div class="lbl hd" style="left:1558px;top:39px;">Add</div><div class="lbl" style="right:257px;top:61px;color:#000;">Color</div><div class="sock" style="left:1660px;top:62px;background:#c8c82a"></div><div class="dd" style="left:1546px;top:81px;width:110px;height:19px"><span class="wt" style="left:7px;top:2px">Add</span><span class="arr" style="top:3px"></span></div><div class="cb" style="left:1549px;top:105px"></div><div class="lbl" style="left:1569px;top:104px;color:#000">Clamp</div><div class="sl" style="left:1546px;top:124px;width:110px;height:18px"><div class="slf" style="width:85px"></div><span class="bt" style="left:14px;top:2px">Fac:</span><span class="bt" style="right:14px;top:2px">0.764</span></div><div class="sock" style="left:1532px;top:128px;background:#a1a1a1"></div><div class="lbl" style="left:1553px;top:148px;color:#000;">Color1</div><div class="sock" style="left:1532px;top:149px;background:#c8c82a"></div><div class="lbl" style="left:1553px;top:168px;color:#000;">Color2</div><div class="sock" style="left:1532px;top:169px;background:#c8c82a"></div><div class="node" style="left:1718px;top:97px;width:128px;height:181px"><div class="hdr" style="height:18px;background:linear-gradient(#5b5b5b,#555555)"></div></div><div class="tri" style="left:1723px;top:104px"></div><div class="lbl hd" style="left:1739px;top:101px;">Output</div><div class="ball" style="left:1827px;top:100px;width:12px;height:12px"></div><svg class="abs" style="left:1727px;top:120px" width="111" height="111" viewBox="0 0 111 111"><defs><pattern id="ck4" width="22.0" height="22.0" patternUnits="userSpaceOnUse"><rect width="22.0" height="22.0" fill="#a9a9a9"/><rect width="11.0" height="11.0" fill="#7e7e7e"/><rect x="11.0" y="11.0" width="11.0" height="11.0" fill="#7e7e7e"/></pattern><clipPath id="cp4"><circle cx="55.0" cy="55.0" r="48.95"/></clipPath><filter id="bl4" x="-20%" y="-20%" width="140%" height="140%"><feGaussianBlur stdDeviation="1.57"/></filter><filter id="bs4" x="-20%" y="-20%" width="140%" height="140%"><feGaussianBlur stdDeviation="0.50"/></filter></defs><rect x="0" y="0" width="111" height="111" fill="url(#ck4)"/><g transform="translate(0.5 0.5)"><g clip-path="url(#cp4)"><rect width="110" height="110" fill="#b8ccc4" opacity="0.22"/><g filter="url(#bl4)"><path d="M4.0 30.0 Q20.0 36.0 45.0 52.0 L55.0 55.0 L45.0 58.0 Q20.0 74.0 4.0 80.0 Z" fill="#f2f8f5" opacity="0.95"/><path d="M106.0 34.0 Q90.0 40.0 68.0 52.0 L55.0 55.0 L68.0 58.0 Q90.0 70.0 106.0 76.0 Z" fill="#eef5f2" opacity="0.9"/><rect x="10.0" y="50.0" width="90.0" height="10.0" fill="#e8f0ec" opacity="0.55"/></g><g filter="url(#bl4)"><path d="M8.0 38.0 Q20.0 4.0 55.0 4.0 Q94.0 4.0 104.0 40.0 Q98.0 50.0 86.0 44.0 Q72.0 28.0 50.0 28.0 Q30.0 30.0 22.0 44.0 Q12.0 48.0 8.0 38.0 Z" fill="#21402f" opacity="0.9"/><path d="M12.0 80.0 Q22.0 105.0 55.0 105.0 Q90.0 105.0 100.0 78.0 Q94.0 70.0 84.0 74.0 Q70.0 86.0 50.0 86.0 Q30.0 84.0 22.0 72.0 Q16.0 70.0 12.0 80.0 Z" fill="#41695a" opacity="0.8"/></g><g fill="#f4f4f4"><rect x="32.0" y="18.0" width="3.0" height="6.0" transform="rotate(-30 34.0 22.0)"/><rect x="37.0" y="16.0" width="3.0" height="6.0" transform="rotate(-30 40.0 20.0)"/><rect x="36.0" y="27.0" width="7.0" height="2.0" transform="rotate(-30 40.0 28.0)"/><rect x="32.0" y="84.0" width="3.0" height="6.0" transform="rotate(30 34.0 88.0)"/><rect x="37.0" y="86.0" width="3.0" height="6.0" transform="rotate(30 40.0 90.0)"/><path d="M76.0 36.0 Q92.0 34.0 100.0 24.0" stroke="#f0f0f0" stroke-width="1.5" fill="none"/><path d="M76.0 74.0 Q92.0 76.0 100.0 86.0" stroke="#f0f0f0" stroke-width="1.5" fill="none"/></g></g></g><rect x="0.5" y="0.5" width="110" height="110" fill="none" stroke="#2a2a2a"/></svg><div class="lbl" style="left:1734px;top:238px;color:#000;">Color</div><div class="sock" style="left:1713px;top:239px;background:#c8c82a"></div><div class="lbl" style="left:1734px;top:259px;color:#000;">Alpha</div><div class="sock" style="left:1713px;top:260px;background:#a1a1a1"></div><div class="sock" style="left:1268px;top:462px;background:#c8c82a"></div>
<svg class="full" width="1902" height="864"><line x1="482" y1="442" x2="534.5" y2="442.8" stroke="#fff" stroke-width="2.2"/><circle cx="458" cy="440" r="24" fill="#5e5e5e" stroke="#fff" stroke-width="2.3"/><path d="M457.5 431 L463 431 L463 449 L457.5 449 L457.5 438 L453 440.5 L451.5 436 Z" fill="#fff"/><line x1="746" y1="141" x2="799" y2="142" stroke="#fff" stroke-width="2.2"/><circle cx="722.5" cy="139.3" r="24" fill="#5e5e5e" stroke="#fff" stroke-width="2.3"/><text x="722.5" y="147.5" text-anchor="middle" font-family="Liberation Sans" font-weight="bold" font-size="24" fill="#fff" stroke="#fff" stroke-width="0.9">2</text><line x1="580" y1="807" x2="613" y2="776.5" stroke="#fff" stroke-width="2.2"/><circle cx="561.5" cy="821.5" r="24" fill="#5e5e5e" stroke="#fff" stroke-width="2.3"/><text x="561.5" y="829.7" text-anchor="middle" font-family="Liberation Sans" font-weight="bold" font-size="24" fill="#fff" stroke="#fff" stroke-width="0.9">3</text><line x1="759" y1="463" x2="811" y2="463" stroke="#fff" stroke-width="2.2"/><circle cx="734.5" cy="460" r="24" fill="#5e5e5e" stroke="#fff" stroke-width="2.3"/><text x="734.5" y="468.2" text-anchor="middle" font-family="Liberation Sans" font-weight="bold" font-size="24" fill="#fff" stroke="#fff" stroke-width="0.9">4</text><line x1="1505" y1="67.5" x2="1557" y2="67.5" stroke="#fff" stroke-width="2.2"/><circle cx="1481" cy="65.5" r="24" fill="#5e5e5e" stroke="#fff" stroke-width="2.3"/><text x="1481" y="73.7" text-anchor="middle" font-family="Liberation Sans" font-weight="bold" font-size="24" fill="#fff" stroke="#fff" stroke-width="0.9">5</text></svg>
</body></html>
